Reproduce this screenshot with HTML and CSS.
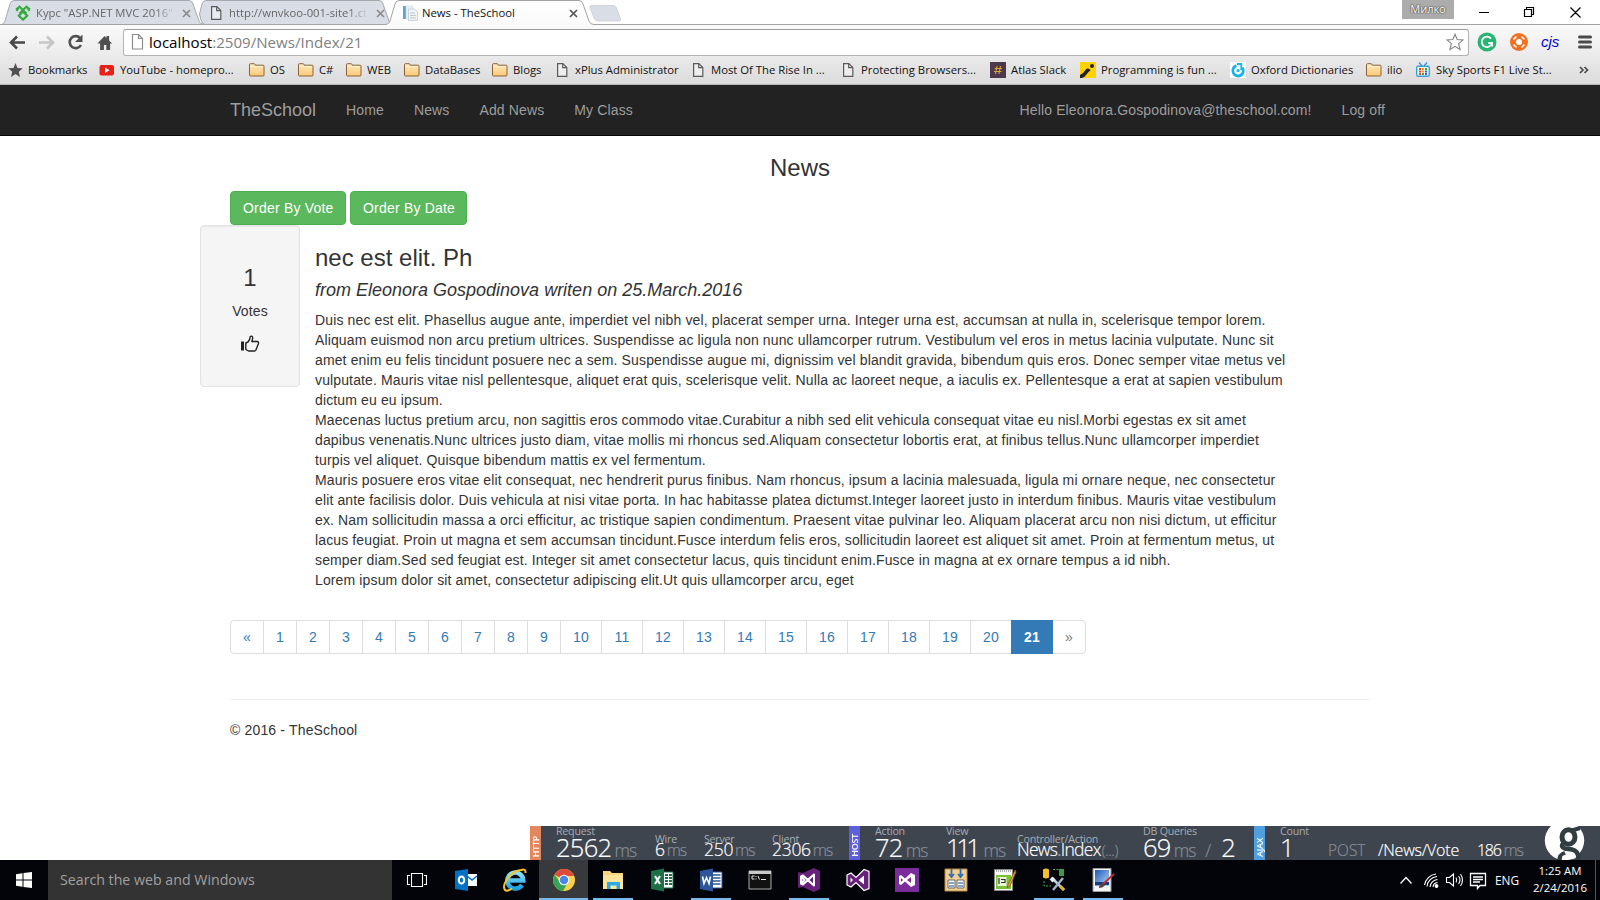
FILE: index.html
```html
<!DOCTYPE html>
<html lang="en">
<head>
<meta charset="utf-8">
<title>News - TheSchool</title>
<link rel="stylesheet" href="styles.css">
</head>
<body>
<svg width="0" height="0" class="defs">
  <defs>
    <linearGradient id="gFolder" x1="0" y1="0" x2="0" y2="1"><stop offset="0" stop-color="#ffe9bd"/><stop offset="1" stop-color="#fbc978"/></linearGradient>
    <linearGradient id="gTab" x1="0" y1="0" x2="0" y2="1"><stop offset="0" stop-color="#fff"/><stop offset="1" stop-color="#fafafa"/></linearGradient>
    <linearGradient id="gIe" x1="0" y1="0" x2="0" y2="1"><stop offset="0" stop-color="#8be2fb"/><stop offset="1" stop-color="#1c9fe0"/></linearGradient>
    <linearGradient id="gSky" x1="0" y1="0" x2="1" y2="1"><stop offset="0" stop-color="#1d56b8"/><stop offset="1" stop-color="#b9dcf5"/></linearGradient>
    <symbol id="folder" viewBox="0 0 16 16"><path d="M.5 4V2.700q0-1 1-1H5q.8 0 1 .8l.2.700h7.800q1 0 1 1V13q0 1-1 1h-12.500q-1 0-1-1z" fill="url(#gFolder)" stroke="#8a6239"/><path d="M1.500 4.500h12.500" stroke="#fff3d6"/></symbol>
    <symbol id="page" viewBox="0 0 16 16"><path d="M3.600 1.600h5.200l4 4v8.800H3.600z" fill="#fff" fill-opacity=".4" stroke="#5a5a5a" stroke-width="1.200"/><path d="M8.700 1.600v4.100h4.100" fill="none" stroke="#5a5a5a" stroke-width="1.200"/></symbol>
  </defs>
</svg>

<div class="tabstrip">
  <svg class="tabshapes" width="1600" height="26" viewBox="0 0 1600 26">
    <path d="M1.500 24.500Q4 24 5 21L10 4Q11 .5 14 .5H189Q192 .5 193 4L199 21Q200 24 204 24.500z" fill="#d9dee6" stroke="#a5a8ad"/>
    <path d="M205 24.500Q202 24 201 20L199.500 14L202 4Q203 .5 206 .5H379Q382 .5 383 4L389 21Q390 24 393 24.500z" fill="#d9dee6" stroke="#a5a8ad"/>
    <path d="M0 24.500H386Q389 24 390 21L395 4Q396 .5 399 .5H579Q582 .5 583 4L589 21Q590 24.500 594 24.500H1600V26H0z" fill="url(#gTab)"/>
    <path d="M0 24.500H386Q389 24 390 21L395 4Q396 .5 399 .5H579Q582 .5 583 4L589 21Q590 24.500 594 24.500H1600" fill="none" stroke="#a3a3a3"/>
    <path d="M591 5.500H613Q615.500 5.500 616.500 8L620.500 19Q621 21 619 21H598Q595.500 21 594.500 19L590 8Q589 5.500 591 5.500z" fill="#d9dee6" stroke="#cfd3d9"/>
  </svg>
  <div class="tab tab-a">
    <svg width="16" height="16" viewBox="0 0 16 16"><path d="M1 4.500L4.500 1.500 8 5 11.500 1.500 15 4.500M4.500 1.500L1.500 6M11.500 1.500L14.500 6M8 5L4.500 8.500M8 5L11.500 8.500" stroke="#33ab3b" stroke-width="2" fill="none"/><path d="M8 6.500l4.200 4.200L8 14.600l-4.200-3.900z" fill="none" stroke="#33ab3b" stroke-width="2.200"/></svg>
    <span class="tab-text fade">Курс "ASP.NET MVC 2016"</span>
    <svg class="x" width="9" height="9" viewBox="0 0 9 9"><path d="M1 1l7 7M8 1L1 8"/></svg>
  </div>
  <div class="tab tab-b">
    <svg width="16" height="16"><use href="#page"/></svg>
    <span class="tab-text fade">http://wnvkoo-001-site1.ct</span>
    <svg class="x" width="9" height="9" viewBox="0 0 9 9"><path d="M1 1l7 7M8 1L1 8"/></svg>
  </div>
  <div class="tab tab-c">
    <svg width="16" height="16" viewBox="0 0 16 16"><path d="M1 1h4v13H1z" fill="#5fa4cd"/><path d="M4 1h7v13H4z" fill="#e9eff4" stroke="#d3dbe2" stroke-width=".6"/><path d="M6.500 4h6l3 3v8.500h-9z" fill="#f0f2f4" stroke="#c5ccd3" stroke-width=".8"/><path d="M8 8h5M8 10.500h6M8 13h6" stroke="#c2c8ce"/></svg>
    <span class="tab-text">News - TheSchool</span>
    <svg class="x dark" width="9" height="9" viewBox="0 0 9 9"><path d="M1 1l7 7M8 1L1 8"/></svg>
  </div>
  <div class="user">Милко</div>
  <svg class="winbtns" width="104" height="24" viewBox="0 0 104 24" fill="none" stroke="#000"><path d="M1 12.500h10M46.500 9.500h7v7h-7zM48.500 9V7.500h7v7H54M92.500 7.500l10 10M102.500 7.500l-10 10" stroke-width="1.200"/></svg>
</div>

<div class="toolbar">
  <svg class="navicons" width="123" height="32" viewBox="0 0 123 32" fill="none">
    <path d="M11 17.500H25M17 11.500L11 17.500l6 6" stroke="#484848" stroke-width="2.600"/>
    <path d="M39 17.500H53M47 11.500l6 6-6 6" stroke="#c6c6c6" stroke-width="2.600"/>
    <path d="M80.500 13.500A6 6 0 1 0 81 20" stroke="#505050" stroke-width="2.600"/><path d="M82.500 9.500v7.500H75z" fill="#505050"/>
    <path d="M97.500 18.500L104.500 11l2 2v-2h2.600v4.500l3 3h-2V25h-3.800v-5h-2.400v5h-3.800v-6.500z" fill="#505050"/>
  </svg>
  <div class="omnibox">
    <svg width="14" height="18" viewBox="0 0 14 18"><path d="M1.500 1.500h6l4 4v10.500h-10zM7.500 1.500v4h4" fill="#fff" stroke="#8d8d8d" stroke-width="1.200"/></svg>
    <span class="url"><b>localhost</b>:2509/News/Index/21</span>
    <svg class="fav" width="18" height="18" viewBox="0 0 18 18"><path d="M9 1.200l2.200 5.300 5.900.4-4.500 3.700 1.500 5.900L9 13.300l-5.100 3.200 1.500-5.900L.9 6.900l5.900-.4z" fill="#fff" stroke="#858585" stroke-width="1.100"/></svg>
  </div>
  <div class="exts">
    <svg width="20" height="20" viewBox="0 0 20 20"><circle cx="10" cy="10" r="9.500" fill="#27b574"/><path d="M14 6.600A5.200 5.200 0 1 0 15 11h-3.700M15.100 10.500v4" fill="none" stroke="#fff" stroke-width="1.800"/></svg>
    <svg width="18" height="18" viewBox="0 0 18 18"><circle cx="9" cy="9" r="9" fill="#f47021"/><circle cx="9" cy="9" r="3" fill="#fff"/><path d="M3.500 6.500L6.500 3.500M11.500 3.500L14.500 6.500M14.500 11.500L11.500 14.500M6.500 14.500L3.500 11.500" stroke="#fff" stroke-width="1.600"/></svg>
    <span class="cjs">cjs</span>
    <svg width="14" height="14" viewBox="0 0 14 14"><path d="M1.500 2h11M1.500 7h11M1.500 12h11" stroke="#4b4b4b" stroke-width="3" stroke-linecap="round"/></svg>
  </div>
</div>

<div class="bookmarks">
  <div><svg width="16" height="16" viewBox="0 0 16 16"><path d="M7.500 1l2 4.900 5.300.4-4 3.400 1.200 5.200-4.500-2.800L3 14.900l1.200-5.200-4-3.400 5.300-.4z" fill="#505050"/></svg>Bookmarks</div>
  <div><svg width="16" height="16" viewBox="0 0 16 16"><rect x=".5" y="3" width="14.500" height="10.500" rx="2" fill="#e62117"/><path d="M6 5.500l4.500 2.700L6 11z" fill="#fff"/></svg>YouTube - homepro...</div>
  <div><svg width="16" height="16"><use href="#folder"/></svg>OS</div>
  <div><svg width="16" height="16"><use href="#folder"/></svg>C#</div>
  <div><svg width="16" height="16"><use href="#folder"/></svg>WEB</div>
  <div><svg width="16" height="16"><use href="#folder"/></svg>DataBases</div>
  <div><svg width="16" height="16"><use href="#folder"/></svg>Blogs</div>
  <div><svg width="16" height="16"><use href="#page"/></svg>xPlus Administrator</div>
  <div><svg width="16" height="16"><use href="#page"/></svg>Most Of The Rise In ...</div>
  <div><svg width="16" height="16"><use href="#page"/></svg>Protecting Browsers...</div>
  <div><svg width="16" height="16" viewBox="0 0 16 16"><path d="M0 0h16v16H0z" fill="#4d394b"/><path d="M7 4L5.500 12M10.500 4L9 12M4.500 6.500h7.500M4 9.500h7.500" stroke="#d9a13b" stroke-width="1.100"/></svg>Atlas Slack</div>
  <div><svg width="16" height="16" viewBox="0 0 16 16"><path d="M0 0h16v16H0z" fill="#ffd200"/><circle cx="12" cy="4" r="2" fill="#222"/><path d="M0 13q3-1 5-4.500t5-1q1 1-1.500 2.500L6 13q-2 3-4 3H0z" fill="#222"/></svg>Programming is fun ...</div>
  <div><svg width="16" height="16" viewBox="0 0 16 16"><path d="M0 0h16v16H0z" fill="#fff"/><path d="M6.500 3.600A5.300 5.300 0 1 0 12.300 5.500" fill="none" stroke="#13b5ea" stroke-width="2.800"/><path d="M7 2h4.300v6" fill="none" stroke="#13b5ea" stroke-width="1.800"/><circle cx="8" cy="8.500" r="1.600" fill="#13b5ea"/></svg>Oxford Dictionaries</div>
  <div><svg width="16" height="16"><use href="#folder"/></svg>ilio</div>
  <div><svg width="16" height="16" viewBox="0 0 16 16"><path d="M4 .5l3 3.500M12 .5L9 4" stroke="#3b8ecb" stroke-width="1.200"/><rect x="1.700" y="4.200" width="12.600" height="10" rx="1.500" fill="#f4fbff" stroke="#3ba0d8" stroke-width="1.400"/><path d="M4 7h2M4 9.500h2M4 12h2" stroke="#e6452e" stroke-width="1.800"/><path d="M7 7h2M7 9.500h2" stroke="#f0a020" stroke-width="1.800"/><path d="M10 7h2M7 12h2" stroke="#38a848" stroke-width="1.800"/><path d="M10 9.500h2M10 12h2" stroke="#3060c8" stroke-width="1.800"/></svg>Sky Sports F1 Live St...</div>
  <div><svg width="10" height="8" viewBox="0 0 10 8"><path d="M1 1l3 3-3 3M5.500 1l3 3-3 3" fill="none" stroke="#4a4a4a" stroke-width="1.700"/></svg></div>
</div>

<nav class="navbar">
  <div class="container">
    <a class="brand">TheSchool</a>
    <a>Home</a><a>News</a><a>Add News</a><a>My Class</a>
    <a class="hello">Hello Eleonora.Gospodinova@theschool.com!</a><a>Log off</a>
  </div>
</nav>

<main class="page">
  <h3 class="heading">News</h3>
  <div class="buttons"><a class="btn">Order By Vote</a><a class="btn">Order By Date</a></div>
  <div class="article">
    <aside class="well">
      <div class="count">1</div>
      <div class="votes">Votes</div>
      <svg width="20" height="18" viewBox="0 0 20 18"><path d="M1 6.500h3v9H1z" fill="#222"/><path d="M5.800 8L8 7Q10 4.500 10.300 1.500Q11.200.8 12.200 1.400Q13.300 2.800 11.800 6.500H17.500Q18.800 7 18.500 8.500L15.800 15.300Q15.500 16 14.500 16H8.500L5.800 14.500z" fill="none" stroke="#222" stroke-width="1.400" stroke-linejoin="round"/></svg>
    </aside>
    <section class="story">
      <h3>nec est elit. Ph</h3>
      <h4>from Eleonora Gospodinova writen on 25.March.2016</h4>
      <p>Duis nec est elit. Phasellus augue ante, imperdiet vel nibh vel, placerat semper urna. Integer urna est, accumsan at nulla in, scelerisque tempor lorem.<br>Aliquam euismod non arcu pretium ultrices. Suspendisse ac ligula non nunc ullamcorper rutrum. Vestibulum vel eros in metus lacinia vulputate. Nunc sit<br>amet enim eu felis tincidunt posuere nec a sem. Suspendisse augue mi, dignissim vel blandit gravida, bibendum quis eros. Donec semper vitae metus vel<br>vulputate. Mauris vitae nisl pellentesque, aliquet erat quis, scelerisque velit. Nulla ac laoreet neque, a iaculis ex. Pellentesque a erat at sapien vestibulum<br>dictum eu eu ipsum.<br>Maecenas luctus pretium arcu, non sagittis eros commodo vitae.Curabitur a nibh sed elit vehicula consequat vitae eu nisl.Morbi egestas ex sit amet<br>dapibus venenatis.Nunc ultrices justo diam, vitae mollis mi rhoncus sed.Aliquam consectetur lobortis erat, at finibus tellus.Nunc ullamcorper imperdiet<br>turpis vel aliquet. Quisque bibendum mattis ex vel fermentum.<br>Mauris posuere eros vitae elit consequat, nec hendrerit purus finibus. Nam rhoncus, ipsum a lacinia malesuada, ligula mi ornare neque, nec consectetur<br>elit ante facilisis dolor. Duis vehicula at nisi vitae porta. In hac habitasse platea dictumst.Integer laoreet justo in interdum finibus. Mauris vitae vestibulum<br>ex. Nam sollicitudin massa a orci efficitur, ac tristique sapien condimentum. Praesent vitae pulvinar leo. Aliquam placerat arcu non nisi dictum, ut efficitur<br>lacus feugiat. Proin ut magna et sem accumsan tincidunt.Fusce interdum felis eros, sollicitudin laoreet est aliquet sit amet. Proin at fermentum metus, ut<br>semper diam.Sed sed feugiat est. Integer sit amet consectetur lacus, quis tincidunt enim.Fusce in magna at ex ornare tempus a id nibh.<br>Lorem ipsum dolor sit amet, consectetur adipiscing elit.Ut quis ullamcorper arcu, eget</p>
    </section>
  </div>
  <div class="pagination"><a>«</a><a>1</a><a>2</a><a>3</a><a>4</a><a>5</a><a>6</a><a>7</a><a>8</a><a>9</a><a class="two">10</a><a class="two">11</a><a class="two">12</a><a class="two">13</a><a class="two">14</a><a class="two">15</a><a class="two">16</a><a class="two">17</a><a class="two">18</a><a class="two">19</a><a class="two">20</a><a class="two active">21</a><a class="disabled">»</a></div>
  <footer>© 2016 - TheSchool</footer>
</main>

<div class="glimpse">
  <div class="side http"><span>HTTP</span></div>
  <div class="m big"><i>Request</i><p><b>2562</b><u>ms</u></p></div>
  <div class="m"><i>Wire</i><p><b>6</b><u>ms</u></p></div>
  <div class="m"><i>Server</i><p><b>250</b><u>ms</u></p></div>
  <div class="m"><i>Client</i><p><b>2306</b><u>ms</u></p></div>
  <div class="side host"><span>HOST</span></div>
  <div class="m big"><i>Action</i><p><b>72</b><u>ms</u></p></div>
  <div class="m big"><i>View</i><p><b class="ones">111</b><u>ms</u></p></div>
  <div class="m ctrl"><i>Controller/Action</i><p><b>News<em>.</em>Index</b><u>(...)</u></p></div>
  <div class="m big"><i>DB Queries</i><p><b>69</b><u>ms</u><u class="slash">/</u><b>2</b></p></div>
  <div class="side ajax"><span>AJAX</span></div>
  <div class="m big"><i>Count</i><p><b>1</b></p></div>
  <div class="m post"><p><u>POST</u></p></div>
  <div class="m path"><p><b>/News/Vote</b></p></div>
  <div class="m dur"><p><b>186</b><u>ms</u></p></div>
  <svg width="56" height="34" viewBox="0 0 56 34"><circle cx="20.500" cy="14.500" r="19.700" fill="#fff"/><ellipse cx="24.500" cy="11" rx="6.500" ry="7.200" fill="none" stroke="#323d42" stroke-width="5"/><path d="M28 4.500l8-2.500" stroke="#323d42" stroke-width="4"/><path d="M19.500 17q-3.500 4 1.500 5.500l7 1q7 1.500 6.500 10.500M15.500 34q0-5 5.500-7" fill="none" stroke="#323d42" stroke-width="4.500"/><ellipse cx="25" cy="31" rx="7" ry="2.500" fill="#fff"/></svg>
</div>

<div class="taskbar">
  <div class="start"><svg width="16" height="16" viewBox="0 0 16 16" fill="#fff"><path d="M0 2.200L6.500 1.200V7.500H0zM7.500 1.100L16 0v7.500H7.500zM0 8.500h6.500v6.300L0 13.800zM7.500 8.500H16V16l-8.500-1.100z"/></svg></div>
  <div class="search">Search the web and Windows</div>
  <div class="apps">
    <div><svg width="20" height="14" viewBox="0 0 20 14" fill="none" stroke="#fff"><path d="M4.500.5h11v13h-11zM3 2.500H.5v9H3M17 2.500h2.500v9H17" stroke-width="1.100"/></svg></div>
    <div><svg width="24" height="24" viewBox="0 0 24 24"><path d="M12 6h11v12H12z" fill="#fff"/><path d="M13 8l5 4 5-4" fill="none" stroke="#0072c6" stroke-width="1.600"/><path d="M1 3l13-2v22L1 21z" fill="#0072c6"/><ellipse cx="7.500" cy="12" rx="2.700" ry="3.600" fill="none" stroke="#fff" stroke-width="2"/></svg></div>
    <div><svg width="26" height="26" viewBox="0 0 26 26"><path d="M20 18A8 8 0 1 1 21.300 13.500H7" fill="none" stroke="url(#gIe)" stroke-width="4.500"/><path d="M20 3Q12 3 6 11T3 23Q5 25 10 21.500" fill="none" stroke="#f3c32a" stroke-width="2"/><path d="M19 3q5-2 4.500 3" fill="none" stroke="#f3c32a" stroke-width="2"/></svg></div>
    <div class="current on"><svg width="24" height="24" viewBox="0 0 24 24"><circle cx="12" cy="12" r="11" fill="#fbd14b"/><path d="M12 12L2.500 6.500A11 11 0 0 1 21.500 6.500L22 8H12z" fill="#de4b3b"/><path d="M2.500 6.500A11 11 0 0 0 11 23L15.500 15 8 14z" fill="#35a457"/><circle cx="12" cy="12" r="5.300" fill="#fff"/><circle cx="12" cy="12" r="4.200" fill="#4a86e8"/></svg></div>
    <div class="on"><svg width="24" height="24" viewBox="0 0 24 24"><path d="M2 3h7l2 2h11v16H2z" fill="#f8d775"/><path d="M2 7h20v14H2z" fill="#fce49a"/><path d="M6 21v-7h13v7h-3.500v-3.500h-6V21z" fill="#2aa9e8"/></svg></div>
    <div><svg width="24" height="24" viewBox="0 0 24 24"><path d="M13 4h10v16H13z" fill="#fff" stroke="#1e7145"/><path d="M15 7h3M19 7h3M15 10h3M19 10h3M15 13h3M19 13h3M15 16h3M19 16h3" stroke="#1e7145" stroke-width="1.800"/><path d="M1 3l13-2.500v23L1 21z" fill="#1e7145"/><path d="M5 8l5 8M10 8l-5 8" stroke="#fff" stroke-width="2"/></svg></div>
    <div class="on"><svg width="24" height="24" viewBox="0 0 24 24"><path d="M13 4h10v16H13z" fill="#fff" stroke="#2b579a"/><path d="M14 7h7.500M14 10h7.500M14 13h7.500M14 16h7.500" stroke="#2b579a" stroke-width="1.400"/><path d="M1 3l13-2.500v23L1 21z" fill="#2b579a"/><path d="M3.500 8.500l1.500 7 2.500-6 2.500 6 1.500-7" fill="none" stroke="#fff" stroke-width="1.600"/></svg></div>
    <div><svg width="24" height="24" viewBox="0 0 24 24"><path d="M1 3h22v18H1z" fill="#111" stroke="#aaa"/><path d="M1 3h22v3H1z" fill="#c9c9c9"/><path d="M4 8h2.500M4 8v3h2.500M8 8v1M8 10.500v1M10 8l1.500 3.500M13 11.500h5" fill="none" stroke="#e5e5e5"/></svg></div>
    <div class="on"><svg width="24" height="24" viewBox="0 0 24 24"><path d="M1 4l5 1 11-5 6 3v18l-6 3-11-5-5 1z" fill="#68217a"/><path d="M4 8.500l3.500 3.500L4 15.500zM17 6.500v11L10.500 12zM4 8.500L6 7.500 17 17.500M4 15.500l2 1L17 6.500" fill="none" stroke="#fff" stroke-width="2" stroke-linejoin="round"/></svg></div>
    <div><svg width="26" height="24" viewBox="0 0 26 24"><path d="M2 7l4-2 5 4.500L19 1.500l5 2v17l-5 2-8-8L6 19l-4-2z" fill="#68217a" stroke="#fff" stroke-width="1.200"/><path d="M5.500 9.500v5L8 12zM19 7.500v9L13.500 12z" fill="#fff"/></svg></div>
    <div><svg width="24" height="24" viewBox="0 0 24 24"><path d="M0 0h24v24H0z" fill="#7b2c9b"/><path d="M4 8l2-1 4 3.500L16 5l4 2v10l-4 2-6-5.500L6 17l-2-1zM6 10v4l2-2zM16 9v6l-4-3z" fill="#fff" fill-rule="evenodd"/></svg></div>
    <div><svg width="24" height="24" viewBox="0 0 24 24"><path d="M1 1h22v22H1z" fill="#f0cf91" stroke="#b98b43"/><path d="M7.500 1v7M16.500 1v7M5 6l2.500 3L10 6M14 6l2.500 3L19 6" fill="none" stroke="#2e6fb8" stroke-width="1.800"/><path d="M4 12h7v8H4zM13 12h7v8h-7z" fill="#fff" stroke="#666"/><path d="M5 15h5M5 18h5M14 15h5M14 18h5" stroke="#5b86bd" stroke-width="1.500"/></svg></div>
    <div><svg width="24" height="24" viewBox="0 0 24 24"><path d="M1.500 1.500h18v21h-18z" fill="#fafafa" stroke="#888"/><path d="M3 7h15v14H3z" fill="#79c235"/><path d="M4.500 9h9v9h-9z" fill="#e9f5dc"/><path d="M6 10v6M8 11.500h4v3H8" stroke="#333" fill="none" stroke-width="1.200"/><path d="M3 3h16" stroke="#aaa" stroke-dasharray="1 1" stroke-width="2"/><path d="M22 2l-7 15-1 3 3-2 6-14z" fill="#e9a92d" stroke="#88531e" stroke-width=".8"/></svg></div>
    <div class="on"><svg width="26" height="24" viewBox="0 0 26 24"><path d="M2 1.500q3-2 6 0v8q-3 2-6 0z" fill="#f5c12a"/><path d="M12 1.500h9M3 13v5h7" fill="none" stroke="#41b649" stroke-dasharray="2 1.500"/><path d="M18 1h5v7h-5z" fill="#3c9d46"/><path d="M11 10l12 12" stroke="#c6d3df" stroke-width="2.500"/><path d="M22 10L12 22" stroke="#9fb2c8" stroke-width="2.500"/><path d="M10 10l3 3" stroke="#e8eef4" stroke-width="4"/><path d="M19 18l4 4" stroke="#e2b32c" stroke-width="3"/></svg></div>
    <div class="on"><svg width="24" height="24" viewBox="0 0 24 24"><path d="M2 .5h18v23H2z" fill="#f4f4f4" stroke="#999"/><path d="M4 2h14v16H4z" fill="url(#gSky)"/><path d="M4 14h14v3H4z" fill="#173c7d"/><path d="M23 6L12 16" stroke="#c5292e" stroke-width="1.800"/><path d="M12 15q-4 1-4 5 4 0 6-3z" fill="#5a4038"/></svg></div>
  </div>
  <div class="tray">
    <svg width="90" height="24" viewBox="0 0 90 24" fill="none" stroke="#fff" stroke-width="1.300"><path d="M1.500 15.500l5.500-6 5.500 6"/><path d="M28 18.500A11 11 0 0 1 38 8.500M31 19A8 8 0 0 1 38.500 11.500M34 19A5 5 0 0 1 38.500 14.500M25.500 17A13 13 0 0 1 37 6" stroke-width="1.100"/><circle cx="37.500" cy="18" r="1.300" fill="#fff"/><path d="M47.500 9.500h3l4-3.500v12l-4-3.500h-3zM57 9.500q1.500 2.500 0 5M59.500 8q3 4 0 8M61.500 6q4 6 0 12" stroke-width="1.100"/><path d="M71.500 5.500h15v12H81l-2.500 3v-3h-7zM74 9h10M74 11.500h10M74 14h7"/></svg>
    <span class="lang">ENG</span>
    <div class="clock"><span>1:25 AM</span><span>2/24/2016</span></div>
    <div class="peek"></div>
  </div>
</div>
</body>
</html>
```
FILE: styles.css
```css
* { box-sizing: border-box; }
body { margin: 0; width: 1600px; height: 900px; overflow: hidden; background: #fff; color: #333; font: 14px/20px "Liberation Sans", Arial, sans-serif; display: flex; flex-direction: column; }
svg { display: block; flex: none; }
.defs { position: absolute; }
h3, h4, p { margin: 0; font-weight: 400; }

/* browser chrome */
.tabstrip, .toolbar, .bookmarks, .glimpse, .taskbar { font-family: "Open Sans", "Noto Sans", sans-serif; flex: none; white-space: nowrap; }
.tabstrip { position: relative; height: 25px; display: flex; }
.tabshapes { position: absolute; left: 0; top: 0; }
.tab { position: relative; height: 25px; display: flex; align-items: center; font-size: 11.3px; color: #666; padding-top: 1px; }
.tab-a { width: 194px; padding-left: 15px; }
.tab-b { width: 192px; padding-left: 14px; }
.tab-c { width: 1016px; padding-left: 16px; color: #111; }
.tab-text { width: 140px; margin-left: 5px; overflow: hidden; }
.tab-c .tab-text { margin-left: 4px; }
.fade { -webkit-mask-image: linear-gradient(90deg, #000 85%, transparent); mask-image: linear-gradient(90deg, #000 85%, transparent); }
.x { margin-left: 6px; fill: none; stroke: #8a8a8a; stroke-width: 1.7; }
.tab-b .x { margin-left: 7px; }
.tab-c .x { margin-left: 7px; stroke: #555; }
.user { position: relative; width: 52px; height: 19px; background: #acacac; color: #fff; text-shadow: 0 0 2px #333, 0 0 1px #333; font-size: 11px; line-height: 18px; text-align: center; }
.winbtns { position: relative; margin-left: 24px; }

.toolbar { height: 32px; display: flex; align-items: flex-start; background: linear-gradient(#fafafa, #eaeaea); }
.omnibox { width: 1346px; height: 27px; margin-top: 4px; padding: 0 4px 2px 7px; display: flex; align-items: center; background: #fff; border: 1px solid #b2b2b2; border-top-color: #9c9c9c; border-radius: 3px; }
.url { flex: 1; margin-left: 4px; font-size: 15.1px; color: #808080; }
.url b { font-weight: 400; color: #000; }
.exts { display: flex; align-items: center; height: 32px; padding: 2px 0 0 8px; }
.exts svg:nth-child(2) { margin-left: 13px; }
.cjs { width: 18px; margin: -1px 19px 0 13px; font: italic 15px/18px "Liberation Sans", Arial, sans-serif; color: #0000e6; }

.bookmarks { height: 28px; padding-left: 8px; display: grid; grid-template-columns: 91px 150px 49px 48px 58px 88px 62px 136px 150px 150px 90px 150px 136px 49px 164px 21px; background: linear-gradient(#e9e9e9, #dcdcdc); border-bottom: 1px solid #b4b4b4; font-size: 11.3px; color: #111; }
.bookmarks div { display: flex; align-items: center; gap: 5px; padding-bottom: 1px; }
.bookmarks div:first-child { gap: 4px; }

/* site */
.navbar { flex: none; height: 51px; background: #222; border-bottom: 1px solid #080808; }
.container { width: 1200px; margin-left: 215px; display: flex; padding-right: 15px; }
.navbar a { padding: 15px; color: #9d9d9d; line-height: 20px; letter-spacing: .13px; white-space: nowrap; }
.navbar .brand { font-size: 18px; letter-spacing: 0; }
.hello { margin-left: auto; }
.page { flex: 1; min-height: 0; width: 1140px; margin-left: 230px; display: flex; flex-direction: column; }
.heading { margin-top: 19px; text-align: center; font-size: 24px; line-height: 26px; }
.buttons { display: flex; gap: 4px; margin-top: 10px; }
.btn { width: 116px; height: 34px; padding: 6px 12px; color: #fff; background: #5cb85c; border: 1px solid #4cae4c; border-radius: 4px; letter-spacing: .2px; white-space: nowrap; }
.btn + .btn { width: 117px; }
.article { display: flex; margin-left: -30px; height: 365px; }
.well { width: 100px; height: 162px; padding-top: 39px; display: flex; flex-direction: column; align-items: center; background: #f5f5f5; border: 1px solid #e3e3e3; border-radius: 4px; box-shadow: inset 0 1px 1px rgba(0, 0, 0, .05); }
.count { font-size: 24px; line-height: 26px; }
.votes { margin: 10px 0 14px; letter-spacing: .13px; }
.story { margin-left: 15px; padding-top: 20px; white-space: nowrap; }
.story h3 { font-size: 24px; line-height: 26px; }
.story h4 { margin: 9px 0 10px; font-size: 18px; line-height: 20px; font-style: italic; }
.story p { letter-spacing: .13px; }
.pagination { margin-top: 30px; display: flex; }
.pagination a { width: 34px; height: 34px; padding: 6px 0; margin-left: -1px; text-align: center; letter-spacing: .2px; border: 1px solid #ddd; color: #337ab7; }
.pagination .two { width: 42px; }
.pagination a:first-child { margin-left: 0; border-radius: 4px 0 0 4px; }
.pagination a:last-child { border-radius: 0 4px 4px 0; }
.pagination .active { background: #337ab7; border-color: #337ab7; color: #fff; font-weight: 700; z-index: 1; }
.pagination .disabled { color: #777; }
footer { margin-top: 45px; padding-top: 20px; border-top: 1px solid #eee; letter-spacing: .16px; }

/* diagnostics bar */
.glimpse { height: 34px; width: 1070px; margin-left: 530px; overflow: hidden; background: #3e454f; display: grid; grid-template-columns: 26px 99px 49px 68px 77px 26px 71px 71px 126px 111px 26px 48px 50px 99px 67px 56px; }
.side { width: 11px; height: 34px; display: flex; align-items: flex-end; justify-content: center; color: #fff; }
.side span { writing-mode: vertical-rl; transform: rotate(180deg); font-size: 9px; line-height: 11px; font-weight: 600; margin-bottom: 3px; letter-spacing: -.3px; }
.http { background: #e4875f; }
.host { background: #5e5fdc; }
.ajax { background: #509fe0; }
.m { height: 34px; display: grid; grid-template-rows: 34px; }
.m i { grid-area: 1 / 1; margin-top: 8px; font-size: 10.7px; line-height: 10px; font-style: normal; color: #a6abb1; letter-spacing: -.25px; }
.m.big i { margin-top: 0; }
.m p { grid-area: 1 / 1; margin-top: 9px; height: 25px; font-size: 24px; line-height: 24px; font-weight: 300; }
.m b { font-weight: 300; font-size: 17.5px; line-height: 1; color: #fff; -webkit-text-stroke: .2px #fff; letter-spacing: -.3px; }
.m u { text-decoration: none; font-size: 16px; line-height: 1; color: #878e96; margin-left: 2px; letter-spacing: -1.1px; -webkit-text-stroke: .2px #878e96; }
.big b { font-size: 25.5px; letter-spacing: -.7px; }
.big u { font-size: 17.5px; margin-left: 3px; letter-spacing: -1px; }
.big .ones { letter-spacing: -4.4px; margin-right: 4px; }
.big .slash { margin: 0 11px 0 10px; }
.m em { color: #878e96; font-style: normal; }
.ctrl b { letter-spacing: -.7px; }
.ctrl u { font-size: 14.5px; letter-spacing: -.4px; margin-left: 1px; }
.post u { margin-left: 0; font-size: 15.5px; letter-spacing: 0; }
.path b { font-size: 16px; letter-spacing: -.2px; }
.dur b { font-size: 16px; letter-spacing: -1.3px; }
.dur u { margin-left: 3px; }

/* taskbar */
.taskbar { height: 40px; background: #02040a; display: flex; color: #fff; }
.start { width: 48px; padding: 12px 0 0 16px; }
.search { width: 344px; background: #333; color: #a0a0a0; font-size: 14.2px; line-height: 40px; padding-left: 12px; }
.apps { display: flex; }
.apps div { width: 49px; height: 40px; display: flex; align-items: center; justify-content: center; background: linear-gradient(#76b9ed, #76b9ed) center bottom / 0 2px no-repeat; }
.apps .on { background-size: 40px 2px; }
.apps .current { background-color: #38393c; background-size: 49px 2px; }
.tray { margin-left: auto; display: flex; align-items: center; }
.lang { width: 24px; margin-left: 6px; font-size: 11.8px; }
.clock { width: 70px; margin-left: 6px; display: flex; flex-direction: column; align-items: center; font-size: 11.4px; line-height: 17px; margin-top: -2px; }
.peek { width: 5px; height: 40px; border-left: 1px solid #555; }
```
